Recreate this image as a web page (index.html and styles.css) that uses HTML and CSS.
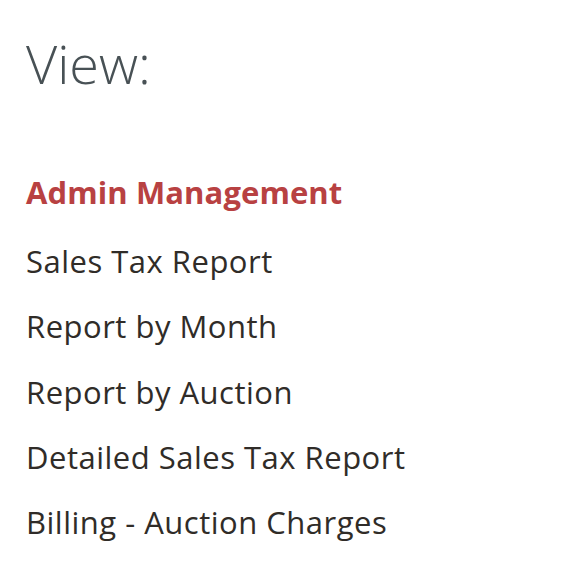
FILE: index.html
```html
<!DOCTYPE html>
<html lang="en">
<head>
    <meta charset="UTF-8">
    <meta name="viewport" content="width=device-width, initial-scale=1.0">
    <title>View</title>
    <link rel="stylesheet" href="styles.css">
</head>
<body>
    <div class="panel">
        <h1 class="title">View:</h1>
        <ul class="menu">
            <li class="active"><a href="#">Admin Management</a></li>
            <li><a href="#">Sales Tax Report</a></li>
            <li><a href="#">Report by Month</a></li>
            <li><a href="#">Report by Auction</a></li>
            <li><a href="#">Detailed Sales Tax Report</a></li>
            <li><a href="#">Billing - Auction Charges</a></li>
        </ul>
    </div>
</body>
</html>
```
FILE: styles.css
```css
*{margin:0; padding:0; box-sizing:border-box}
body{background:#fff; font-family:"Open Sans", Lato, sans-serif}
.panel{padding:28px 0 0 26px}
.title{font-weight:300; font-size:54px; line-height:70px; color:#485155; letter-spacing:0}
.menu{list-style-type:none; margin-top:77px; display:flex; flex-direction:column}
.menu li{height:65.25px; font-size:31px; line-height:34px; letter-spacing:0.5px}
.menu a{color:#302c28; text-decoration:none}
.menu .active{height:69px; letter-spacing:0.1px}
.menu .active a{color:#b84142; font-weight:700}
```
